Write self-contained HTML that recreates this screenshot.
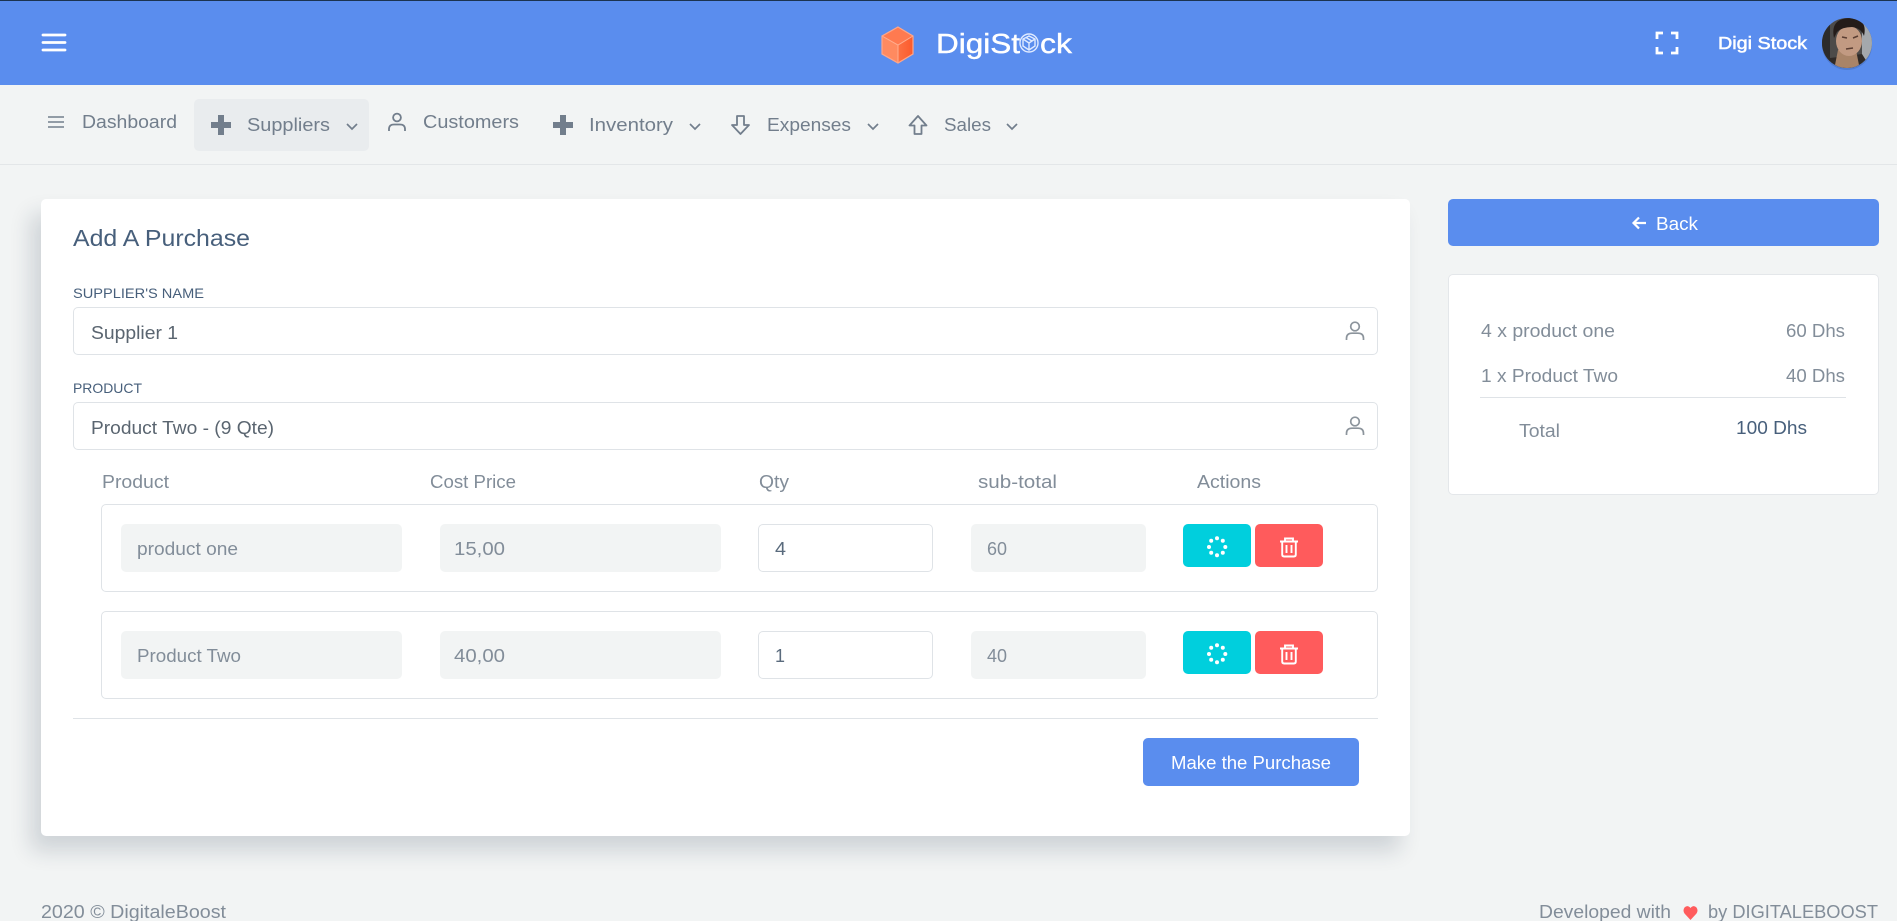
<!DOCTYPE html>
<html lang="en">
<head>
<meta charset="utf-8">
<title>DigiStock - Add A Purchase</title>
<style>
html,body{margin:0;padding:0;width:1897px;height:921px;overflow:hidden;background:#f2f4f4;font-family:"Liberation Sans",sans-serif}
.b{position:absolute;box-sizing:border-box}
svg{position:absolute;left:0;top:0}
</style>
</head>
<body>
<div class="b" style="left:0;top:0;width:1897px;height:85px;background:#5a8dee;border-top:1px solid #1b3350"></div>
<div class="b" style="left:0;top:164px;width:1897px;height:1px;background:#e3e6e8"></div>
<div class="b" style="left:194px;top:99px;width:175px;height:52px;background:#e9ecee;border-radius:5px"></div>
<div class="b" style="left:41px;top:199px;width:1369px;height:637px;background:#fff;border-radius:5px;box-shadow:-10px 15px 22px 0 rgba(25,42,70,.16)"></div>
<div class="b" style="left:1448px;top:199px;width:431px;height:47px;background:#5a8dee;border-radius:5px"></div>
<div class="b" style="left:1448px;top:274px;width:431px;height:221px;background:#fff;border:1px solid #e4e7ea;border-radius:5px"></div>
<div class="b" style="left:73px;top:307px;width:1305px;height:48px;background:#fff;border:1px solid #dfe3e7;border-radius:5px"></div>
<div class="b" style="left:73px;top:402px;width:1305px;height:48px;background:#fff;border:1px solid #dfe3e7;border-radius:5px"></div>
<div class="b" style="left:101px;top:504px;width:1277px;height:88px;border:1px solid #dfe3e7;border-radius:5px"></div>
<div class="b" style="left:101px;top:611px;width:1277px;height:88px;border:1px solid #dfe3e7;border-radius:5px"></div>
<div class="b" style="left:121px;top:524px;width:281px;height:48px;background:#f2f4f4;border-radius:5px"></div>
<div class="b" style="left:440px;top:524px;width:281px;height:48px;background:#f2f4f4;border-radius:5px"></div>
<div class="b" style="left:758px;top:524px;width:175px;height:48px;background:#fff;border:1px solid #dfe3e7;border-radius:5px"></div>
<div class="b" style="left:971px;top:524px;width:175px;height:48px;background:#f2f4f4;border-radius:5px"></div>
<div class="b" style="left:1183px;top:524px;width:68px;height:43px;background:#00cfdd;border-radius:5px"></div>
<div class="b" style="left:1255px;top:524px;width:68px;height:43px;background:#ff5b5c;border-radius:5px"></div>
<div class="b" style="left:121px;top:631px;width:281px;height:48px;background:#f2f4f4;border-radius:5px"></div>
<div class="b" style="left:440px;top:631px;width:281px;height:48px;background:#f2f4f4;border-radius:5px"></div>
<div class="b" style="left:758px;top:631px;width:175px;height:48px;background:#fff;border:1px solid #dfe3e7;border-radius:5px"></div>
<div class="b" style="left:971px;top:631px;width:175px;height:48px;background:#f2f4f4;border-radius:5px"></div>
<div class="b" style="left:1183px;top:631px;width:68px;height:43px;background:#00cfdd;border-radius:5px"></div>
<div class="b" style="left:1255px;top:631px;width:68px;height:43px;background:#ff5b5c;border-radius:5px"></div>
<div class="b" style="left:73px;top:718px;width:1305px;height:1px;background:#dfe3e7"></div>
<div class="b" style="left:1143px;top:738px;width:216px;height:48px;background:#5a8dee;border-radius:5px"></div>
<div class="b" style="left:1480px;top:397px;width:366px;height:1px;background:#dfe3e7"></div>

<svg width="1897" height="921" viewBox="0 0 1897 921" xmlns="http://www.w3.org/2000/svg" font-family="'Liberation Sans',sans-serif">
<defs>
<clipPath id="av"><circle cx="1847" cy="43" r="25"/></clipPath>
<linearGradient id="cube" x1="0" x2="1"><stop offset="0" stop-color="#ff8a5c"/><stop offset="1" stop-color="#fb5a2c"/></linearGradient>
<g id="spin" fill="#fff"><circle cx="0" cy="-8.700" r="2"/><circle cx="5.800" cy="-6.200" r="2"/><circle cx="8.300" cy="0" r="2"/><circle cx="5.800" cy="5.800" r="2"/><circle cx="0" cy="8.300" r="2"/><circle cx="-5.800" cy="5.800" r="2"/><circle cx="-8" cy="0" r="2"/><circle cx="-5.800" cy="-6.200" r="2"/></g>
<g id="trash" fill="none" stroke="#fff" stroke-width="1.900"><path d="M-9 -5.500H9M-4 -5.500V-8.500H4V-5.500M-6.800 -5V7.500Q-6.800 9.500-4.800 9.500H4.800Q6.800 9.500 6.800 7.500V-5M-2.500 -2V6M2.500 -2V6"/></g>
<g id="user" fill="none" stroke="#8c949c" stroke-width="1.700"><circle cx="0" cy="-4.500" r="4.300"/><path d="M-8.500 9V7.500Q-8.500 2.200-3 2.200H3Q8.500 2.200 8.500 7.500V9"/></g>
<path id="chev" d="M0 0L5 5L10 0" fill="none" stroke="#727e8c" stroke-width="1.700"/>
<path id="plus" d="M7 0H13V7H20V13H13V20H7V13H0V7H7Z" fill="#727e8c"/>
</defs>

<!-- header icons -->
<g stroke="#fff" stroke-width="2.800" fill="none" stroke-linecap="round"><path d="M43 35H65M43 42.500H65M43 50H65"/></g>
<path d="M1657 39V33H1663M1671 33H1677V39M1677 47V53H1671M1663 53H1657V47" fill="none" stroke="#fff" stroke-width="2.800"/>

<!-- logo -->
<path d="M898 27L913 36V54L898 63L882 54V36Z" fill="url(#cube)"/>
<path d="M898 27L913 36L898 45L882 36Z" fill="#ff7a50"/>
<path d="M898 45V63L882 54V36Z" fill="#ff8a60"/>
<path d="M882 36L898 45L913 36M898 45V63" stroke="#ffae90" stroke-width="1" fill="none"/>
<path d="M898 27L913 36V54L898 63L882 54V36Z" fill="none" stroke="#ffa688" stroke-width="1.200"/>
<text x="936" y="53" font-size="28" fill="#fff" stroke="#fff" stroke-width=".4" textLength="84" lengthAdjust="spacingAndGlyphs">DigiSt</text>
<text x="1040" y="53" font-size="28" fill="#fff" stroke="#fff" stroke-width=".4" textLength="32" lengthAdjust="spacingAndGlyphs">ck</text>
<g fill="none" stroke="#dfeaff" stroke-width="1.400"><circle cx="1029" cy="43" r="9"/><path d="M1029 36L1035 39V46L1029 50L1023 46V39ZM1023 39L1029 43L1035 39M1029 43V50M1026 37.500L1032 41"/></g>
<text x="1718" y="49" font-size="17.500" fill="#fff" stroke="#fff" stroke-width=".5" textLength="89" lengthAdjust="spacingAndGlyphs">Digi Stock</text>

<!-- avatar -->
<circle cx="1847" cy="45" r="25" fill="#3d5f9e" opacity=".35"/>
<g clip-path="url(#av)">
<rect x="1820" y="16" width="54" height="54" fill="#4d4b49"/>
<rect x="1862" y="16" width="12" height="54" fill="#a4a8ac"/>
<rect x="1820" y="16" width="10" height="54" fill="#2c2b2a"/>
<path d="M1830 58L1862 54L1872 70H1824Z" fill="#2f2a27"/>
<path d="M1838 50H1856L1860 70H1834Z" fill="#a98468"/>
<ellipse cx="1849" cy="41" rx="13" ry="15" fill="#c29a82"/>
<path d="M1834 38Q1830 19 1849 18Q1868 18 1864 36Q1861 28 1852 27Q1842 27 1837 32Z" fill="#241c19"/>
<path d="M1842 37L1847 38M1853 38L1858 36M1846 49L1853 48" stroke="#5a3d32" stroke-width="1.500" fill="none"/>
</g>

<!-- nav -->
<path d="M48 117H64M48 122H64M48 127H64" stroke="#727e8c" stroke-width="1.600" fill="none"/>
<text x="82" y="128" font-size="18" fill="#727e8c" textLength="95" lengthAdjust="spacingAndGlyphs">Dashboard</text>
<use href="#plus" x="211" y="115"/>
<text x="247" y="131" font-size="18" fill="#727e8c" textLength="83" lengthAdjust="spacingAndGlyphs">Suppliers</text>
<use href="#chev" x="347" y="124"/>
<g fill="none" stroke="#727e8c" stroke-width="1.800"><circle cx="397" cy="117.500" r="3.900"/><path d="M389 131V129Q389 124.500 394 124.500H400Q405 124.500 405 129V131"/></g>
<text x="423" y="128" font-size="18" fill="#727e8c" textLength="96" lengthAdjust="spacingAndGlyphs">Customers</text>
<use href="#plus" x="553" y="115"/>
<text x="589" y="131" font-size="18" fill="#727e8c" textLength="84" lengthAdjust="spacingAndGlyphs">Inventory</text>
<use href="#chev" x="690" y="124"/>
<path d="M737 116H744V125H749L740.500 134L732 125H737Z" fill="none" stroke="#727e8c" stroke-width="1.800" stroke-linejoin="round"/>
<text x="767" y="131" font-size="18" fill="#727e8c" textLength="84" lengthAdjust="spacingAndGlyphs">Expenses</text>
<use href="#chev" x="868" y="124"/>
<path d="M914.500 134H921.500V125.500H926.500L918 116L909.500 125.500H914.500Z" fill="none" stroke="#727e8c" stroke-width="1.800" stroke-linejoin="round"/>
<text x="944" y="131" font-size="18" fill="#727e8c" textLength="47" lengthAdjust="spacingAndGlyphs">Sales</text>
<use href="#chev" x="1007" y="124"/>

<!-- back -->
<path d="M1646 223H1634M1639 217.500L1633.500 223L1639 228.500" fill="none" stroke="#fff" stroke-width="2.200"/>
<text x="1656" y="230" font-size="18" fill="#fff" textLength="42" lengthAdjust="spacingAndGlyphs">Back</text>

<!-- form -->
<text x="73" y="246" font-size="23" fill="#475f7b" textLength="177" lengthAdjust="spacingAndGlyphs">Add A Purchase</text>
<text x="73" y="298" font-size="14" fill="#475f7b" textLength="131" lengthAdjust="spacingAndGlyphs">SUPPLIER'S NAME</text>
<text x="91" y="339" font-size="18" fill="#5a6570" textLength="87" lengthAdjust="spacingAndGlyphs">Supplier 1</text>
<use href="#user" x="1355" y="331"/>
<text x="73" y="393" font-size="14" fill="#475f7b" textLength="69" lengthAdjust="spacingAndGlyphs">PRODUCT</text>
<text x="91" y="434" font-size="18" fill="#5a6570" textLength="183" lengthAdjust="spacingAndGlyphs">Product Two - (9 Qte)</text>
<use href="#user" x="1355" y="426"/>

<g font-size="18" fill="#828d99">
<text x="102" y="488" textLength="67" lengthAdjust="spacingAndGlyphs">Product</text>
<text x="430" y="488" textLength="86" lengthAdjust="spacingAndGlyphs">Cost Price</text>
<text x="759" y="488" textLength="30" lengthAdjust="spacingAndGlyphs">Qty</text>
<text x="978" y="488" textLength="79" lengthAdjust="spacingAndGlyphs">sub-total</text>
<text x="1197" y="488" textLength="64" lengthAdjust="spacingAndGlyphs">Actions</text>
<text x="137" y="555" textLength="101" lengthAdjust="spacingAndGlyphs">product one</text>
<text x="454" y="555" textLength="51" lengthAdjust="spacingAndGlyphs">15,00</text>
<text x="987" y="555" textLength="20" lengthAdjust="spacingAndGlyphs">60</text>
<text x="137" y="662" textLength="104" lengthAdjust="spacingAndGlyphs">Product Two</text>
<text x="454" y="662" textLength="51" lengthAdjust="spacingAndGlyphs">40,00</text>
<text x="987" y="662" textLength="20" lengthAdjust="spacingAndGlyphs">40</text>
</g>
<g font-size="18" fill="#5a6b7d">
<text x="775" y="555" textLength="11" lengthAdjust="spacingAndGlyphs">4</text>
<text x="775" y="662" textLength="10" lengthAdjust="spacingAndGlyphs">1</text>
</g>
<use href="#spin" x="1217" y="547"/>
<use href="#trash" x="1289" y="547"/>
<use href="#spin" x="1217" y="654"/>
<use href="#trash" x="1289" y="654"/>
<text x="1171" y="769" font-size="18" fill="#fff" textLength="160" lengthAdjust="spacingAndGlyphs">Make the Purchase</text>

<!-- summary -->
<g font-size="18" fill="#828d99">
<text x="1481" y="337" textLength="134" lengthAdjust="spacingAndGlyphs">4 x product one</text>
<text x="1786" y="337" textLength="59" lengthAdjust="spacingAndGlyphs">60 Dhs</text>
<text x="1481" y="382" textLength="137" lengthAdjust="spacingAndGlyphs">1 x Product Two</text>
<text x="1786" y="382" textLength="59" lengthAdjust="spacingAndGlyphs">40 Dhs</text>
<text x="1519" y="437" textLength="41" lengthAdjust="spacingAndGlyphs">Total</text>
</g>
<text x="1736" y="434" font-size="18" fill="#475f7b" textLength="71" lengthAdjust="spacingAndGlyphs">100 Dhs</text>

<!-- footer -->
<g font-size="18" fill="#828d99">
<text x="41" y="918" textLength="185" lengthAdjust="spacingAndGlyphs">2020 © DigitaleBoost</text>
<text x="1539" y="918" textLength="132" lengthAdjust="spacingAndGlyphs">Developed with</text>
<text x="1708" y="918" textLength="170" lengthAdjust="spacingAndGlyphs">by DIGITALEBOOST</text>
</g>
<path d="M1690.500 920L1684.500 913.500Q1682.500 910.500 1684.500 907.500Q1687.500 904.500 1690.500 908Q1693.500 904.500 1696.500 907.500Q1698.500 910.500 1696.500 913.500Z" fill="#ff5b5c"/>
</svg>
</body>
</html>
